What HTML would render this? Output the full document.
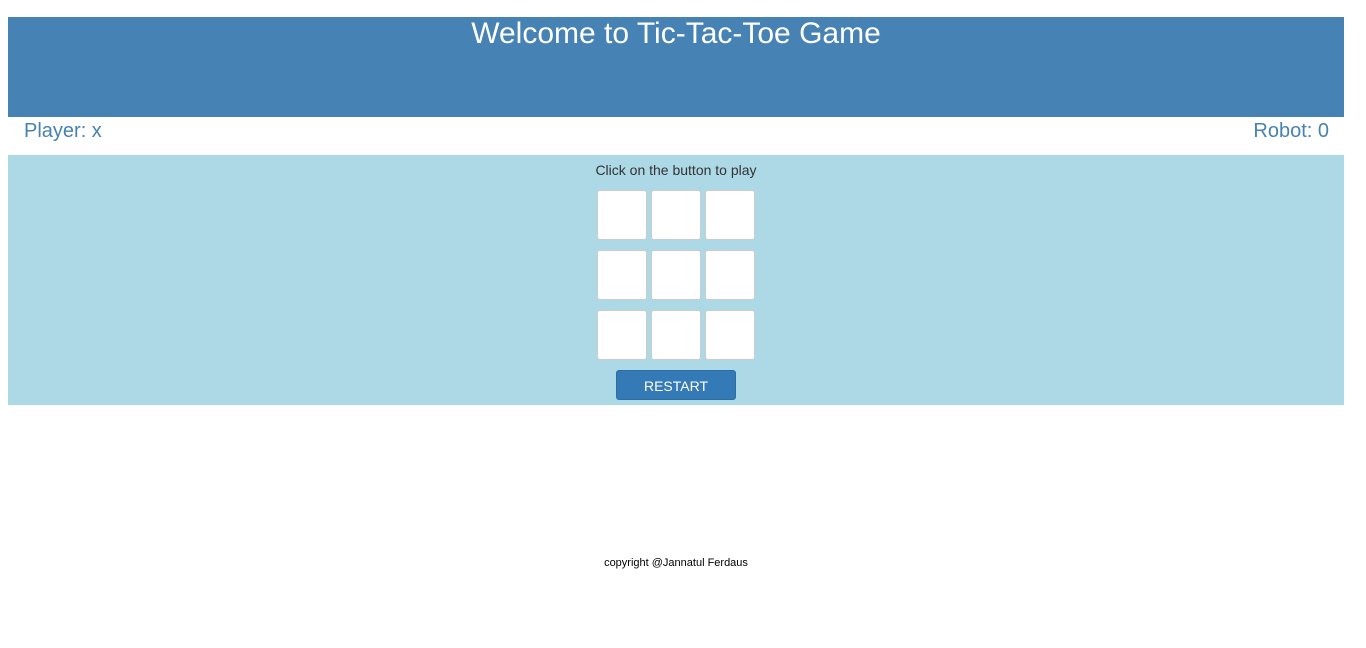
<html><head><style>
body{margin:0;font-family:"Liberation Sans",sans-serif;background:#fff;}
.hdr{position:absolute;left:8px;top:17px;width:1336px;height:100px;background:#4682b4;color:#fff;text-align:center;font-size:30px;line-height:33px;}
.sc{position:absolute;top:120px;font-size:20px;color:#4682b4;}
.pl{position:absolute;left:8px;top:155px;width:1336px;height:250px;background:#add8e6;}
.c{position:absolute;width:48px;height:48px;background:#fff;border:1px solid #ccc;border-radius:3px;}
.btn{position:absolute;left:616px;top:370px;width:118px;height:28px;background:#337ab7;border:1px solid #2e6da4;border-radius:3px;color:#fff;font-size:14px;text-align:center;line-height:30px;}
</style></head><body>
<div class="hdr">Welcome to Tic-Tac-Toe Game</div>
<div class="sc" style="left:24px">Player: x</div>
<div class="sc" style="right:37px">Robot: 0</div>
<div class="pl"></div>
<div style="position:absolute;left:0;width:1352px;top:162px;text-align:center;font-size:14px;color:#333">Click on the button to play</div>
<div class="c" style="left:597px;top:190px"></div><div class="c" style="left:651px;top:190px"></div><div class="c" style="left:705px;top:190px"></div>
<div class="c" style="left:597px;top:250px"></div><div class="c" style="left:651px;top:250px"></div><div class="c" style="left:705px;top:250px"></div>
<div class="c" style="left:597px;top:310px"></div><div class="c" style="left:651px;top:310px"></div><div class="c" style="left:705px;top:310px"></div>
<div class="btn">RESTART</div>
<div style="position:absolute;left:0;width:1352px;top:557px;text-align:center;font-size:11px;color:#000">copyright @Jannatul Ferdaus</div>
</body></html>
